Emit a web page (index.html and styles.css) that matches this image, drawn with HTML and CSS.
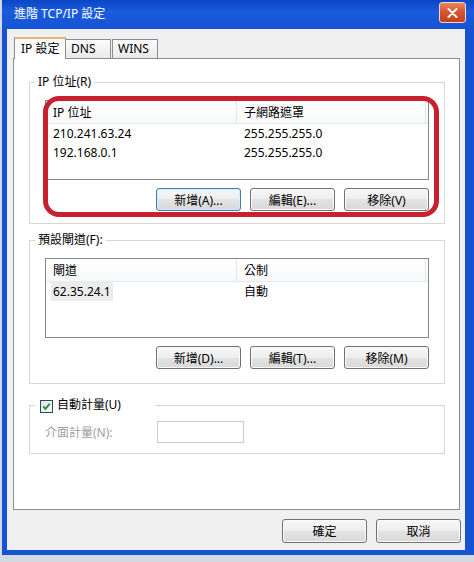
FILE: index.html
```html
<!DOCTYPE html>
<html lang="zh-Hant">
<head>
    <meta charset="UTF-8">
    <meta name="viewport" content="width=device-width, initial-scale=1.0">
    <title>進階 TCP/IP 設定</title>
    <link rel="stylesheet" href="styles.css">
</head>
<body>
    <div class="window">
        <div class="titlebar">
            <span class="title">進階 TCP/IP 設定</span>
            <button class="close">
                <svg width="11" height="10" viewBox="0 0 11 10">
                    <path d="M1.5 1 L9.5 9 M9.5 1 L1.5 9" stroke="#fff" stroke-width="2" stroke-linecap="round"/>
                </svg>
            </button>
        </div>

        <div class="client">
            <div class="tabs">
                <div class="tab active">IP 設定</div>
                <div class="tab dns">DNS</div>
                <div class="tab wins">WINS</div>
            </div>

            <div class="panel">
                <fieldset class="group">
                    <legend>IP 位址(R)</legend>
                    <div class="marked">
                        <div class="list">
                            <div class="list-head">
                                <div class="col c1">IP 位址</div>
                                <div class="col c2">子網路遮罩</div>
                            </div>
                            <div class="row">
                                <div class="col c1">210.241.63.24</div>
                                <div class="col c2">255.255.255.0</div>
                            </div>
                            <div class="row">
                                <div class="col c1">192.168.0.1</div>
                                <div class="col c2">255.255.255.0</div>
                            </div>
                        </div>
                        <div class="actions">
                            <button class="btn focus">新增(A)...</button>
                            <button class="btn">編輯(E)...</button>
                            <button class="btn">移除(V)</button>
                        </div>
                    </div>
                </fieldset>

                <fieldset class="group gateway">
                    <legend>預設閘道(F):</legend>
                    <div class="list">
                        <div class="list-head">
                            <div class="col c1">閘道</div>
                            <div class="col c2">公制</div>
                        </div>
                        <div class="row">
                            <div class="col c1"><span class="picked">62.35.24.1</span></div>
                            <div class="col c2">自動</div>
                        </div>
                    </div>
                    <div class="actions">
                        <button class="btn">新增(D)...</button>
                        <button class="btn">編輯(T)...</button>
                        <button class="btn">移除(M)</button>
                    </div>
                </fieldset>

                <fieldset class="group metric-group">
                    <legend class="check-legend">
                        <svg class="checkbox" width="13" height="13" viewBox="0 0 13 13">
                            <defs>
                                <linearGradient id="cbfill" x1="0" y1="0" x2="1" y2="1">
                                    <stop offset="0" stop-color="#dfe4e8"/>
                                    <stop offset="1" stop-color="#fbfcfc"/>
                                </linearGradient>
                            </defs>
                            <rect x="0.5" y="0.5" width="12" height="12" fill="url(#cbfill)" stroke="#30485a"/>
                            <path d="M3.2 6.4 L5.4 8.9 L9.8 3.6" fill="none" stroke="#2f9a3b" stroke-width="2"/>
                        </svg>
                        <span>自動計量(U)</span>
                    </legend>
                    <div class="metric-row">
                        <span class="disabled">介面計量(N):</span>
                        <div class="metric-box"></div>
                    </div>
                </fieldset>
            </div>

            <div class="footer">
                <button class="btn big">確定</button>
                <button class="btn big">取消</button>
            </div>
        </div>
    </div>
</body>
</html>
```

FILE: styles.css
```css
* {
    box-sizing: border-box;
}
body {
    margin: 0;
    background: #d3d9e3;
    font-family: "Noto Sans", "Noto Sans CJK TC", sans-serif;
    font-size: 12px;
    color: #000;
}
.window {
    margin-left: 2px;
    width: 472px;
    height: 555px;
    background: #1652d4;
    display: flex;
    flex-direction: column;
}
.titlebar {
    height: 29px;
    display: flex;
    align-items: flex-start;
    padding: 0 8px 0 12px;
    background: linear-gradient(#0a46c6, #1a5cdc 40%, #1553d4);
}
.title {
    color: #fff;
    line-height: 16px;
    margin-top: 6px;
}
.close {
    margin-left: auto;
    margin-top: 2px;
    width: 27px;
    height: 21px;
    padding: 0;
    border: 1px solid #efd9d0;
    border-radius: 3px;
    background: linear-gradient(#e8865f, #d4532d 50%, #c3401d);
    display: flex;
    align-items: center;
    justify-content: center;
}
.client {
    flex: 1;
    margin: 0 9px 5px 5px;
    padding: 8px 4px 0 6px;
    background: #f0f0f0;
    display: flex;
    flex-direction: column;
}

/* tabs */
.tabs {
    display: flex;
    align-items: flex-end;
    height: 21px;
}
.tab {
    height: 19px;
    padding-left: 5px;
    line-height: 18px;
    border: 1px solid #898c95;
    border-bottom: none;
    background: linear-gradient(#fcfcfc, #e9e9e9);
}
.tab.active {
    position: relative;
    z-index: 1;
    width: 52px;
    height: 22px;
    margin-left: 1px;
    margin-bottom: -1px;
    padding-left: 6px;
    line-height: 20px;
    background: #fff;
    border-top: 2px solid #e9b66b;
}
.tab.dns {
    width: 46px;
    margin-left: -1px;
}
.tab.wins {
    width: 46px;
    margin-left: 1px;
}

.panel {
    height: 452px;
    margin-right: 1px;
    padding: 15px 14px 0 15px;
    background: #fff;
    border: 1px solid #898c95;
}

/* group boxes */
.group {
    margin: 0;
    padding: 10px 15px 12px;
    border: 1px solid #d7d7d7;
    min-width: 0;
}
.group legend {
    margin-left: -10px;
    padding: 0 3px;
    line-height: 16px;
}
.gateway {
    margin-top: 8px;
    padding-bottom: 14px;
}
.metric-group {
    margin-top: 13px;
    padding-top: 8px;
    padding-bottom: 10px;
}
.check-legend {
    width: 120px;
    display: flex;
    align-items: center;
}
.checkbox {
    margin-left: 2px;
    margin-right: 4px;
    margin-top: 2px;
}

.marked {
    position: relative;
}
.marked::after {
    content: "";
    position: absolute;
    top: -4px;
    left: -2px;
    right: -10px;
    bottom: -6px;
    border: 5px solid #c8202f;
    border-radius: 16px;
    pointer-events: none;
}

/* list views */
.list {
    height: 80px;
    border: 1px solid #828790;
    background: #fff;
}
.list-head {
    display: flex;
    height: 23px;
    line-height: 24px;
    border-bottom: 1px solid #e4e9f2;
    background: linear-gradient(#fff, #f8f9fb);
}
.list-head .c1 {
    border-right: 1px solid #e5e5e5;
}
.list-head .c2 {
    width: 189px;
    border-right: 1px solid #e5e5e5;
}
.row {
    display: flex;
    height: 19px;
    line-height: 19px;
}
.col {
    padding-left: 7px;
}
.c1 {
    width: 191px;
}
.row .c2 {
    padding-left: 7px;
}
.picked {
    display: inline-block;
    margin-left: -2px;
    padding: 0 2px;
    background: #ececec;
}

.actions {
    display: flex;
    justify-content: flex-end;
    gap: 9px;
    margin-top: 8px;
}
.btn {
    width: 85px;
    height: 23px;
    padding: 0;
    font: inherit;
    color: #000;
    border: 1px solid #707070;
    border-radius: 3px;
    background: linear-gradient(#f7f7f7, #eeeeee 50%, #e3e3e3 50%, #d9d9d9);
    box-shadow: inset 0 0 0 1px #fbfbfb;
}
.btn.focus {
    border-color: #3c7fb1;
    box-shadow: inset 0 0 0 1px #d4ebf9;
}
.btn.big {
    height: 24px;
}

.metric-row {
    display: flex;
    align-items: center;
}
.disabled {
    width: 112px;
    color: #a0a0a0;
}
.metric-box {
    width: 87px;
    height: 22px;
    border: 1px solid #cbcbcb;
    background: #fff;
}

.footer {
    display: flex;
    justify-content: flex-end;
    gap: 9px;
    margin-top: 9px;
}
```
